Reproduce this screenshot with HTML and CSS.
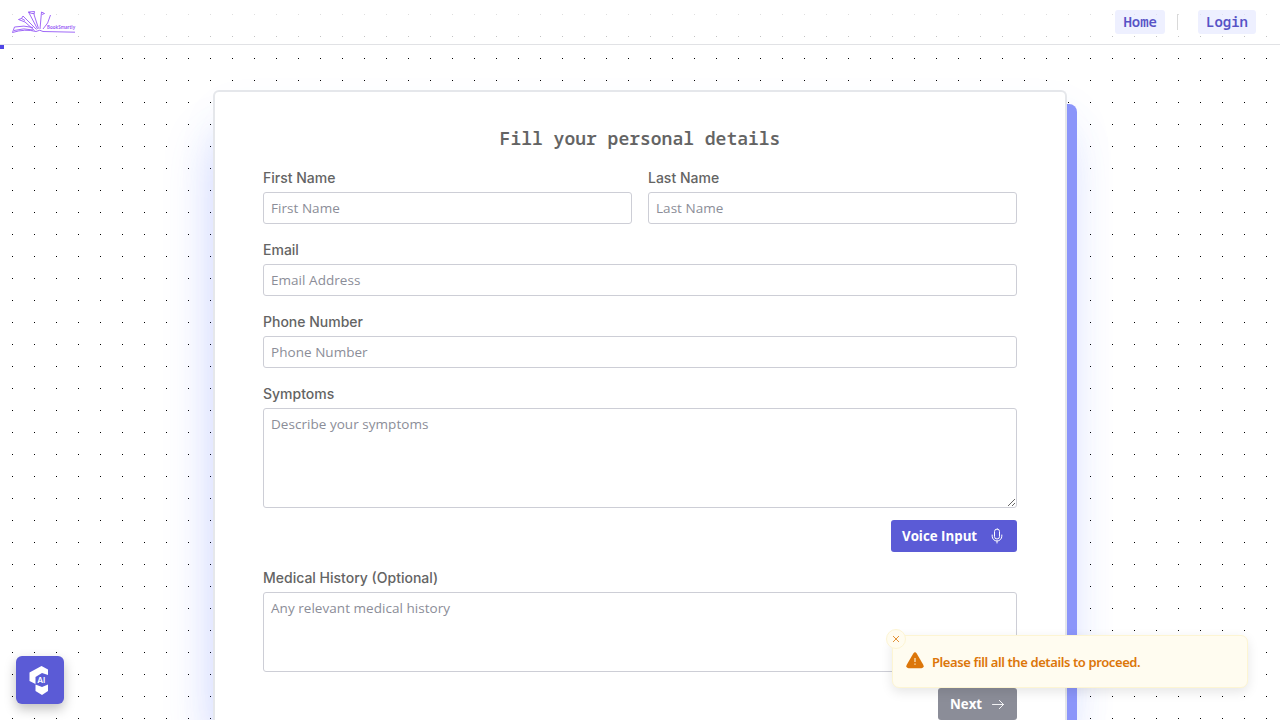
FILE: index.html
```html
<!DOCTYPE html>
<html lang="en">
<head>
<meta charset="utf-8">
<title>BookSmartly</title>
<link rel="stylesheet" href="styles.css">
</head>
<body>
<header class="navbar">
  <svg class="logo" width="66" height="26" viewBox="0 0 66 26" fill="none" stroke="#8f4ff6" stroke-width=".85">
    <path d="M1.5 23.5 3.5 18Q13 16 22 18.5M1.5 23.5Q14 19.5 25 22.5Q29 20 32 22.5L64 23.2M3 21.5Q13 18.5 22 21M23.5 21.5 14 13 7.5 10.5 10.5 9.5 12 7 25.5 20.5M10.5 9.5 14 11.5M26.5 20 17.5 3 23.5 2.5 23 5.5 27.5 19.5M17.5 3 20.5 4.5 23 4.5M29 20 30.5 3 33.5 4.5 31 5.5M32 20Q37.5 15 39.5 6"/>
    <text x="36" y="20" class="logo-text">BookSmartly</text>
  </svg>
  <nav class="links">
    <a class="link">Home</a>
    <span class="divider"></span>
    <a class="link">Login</a>
  </nav>
</header>
<div class="progress"></div>
<main class="page">
  <div class="card-wrap">
    <form class="card">
      <h1 class="title">Fill your personal details</h1>
      <div class="row">
        <label class="field"><span class="label">First Name</span><input class="input" placeholder="First Name"></label>
        <label class="field"><span class="label">Last Name</span><input class="input" placeholder="Last Name"></label>
      </div>
      <label class="field"><span class="label">Email</span><input class="input" placeholder="Email Address"></label>
      <label class="field"><span class="label">Phone Number</span><input class="input" placeholder="Phone Number"></label>
      <label class="field symptoms"><span class="label">Symptoms</span><textarea class="input area" placeholder="Describe your symptoms"></textarea></label>
      <button type="button" class="button voice">Voice Input
        <svg width="16" height="16" viewBox="0 0 16 16" fill="none" stroke="currentColor" stroke-linecap="round"><rect x="5.5" y="1" width="5" height="10" rx="2.5"/><path d="M3.2 7v1.2a4.8 4.8 0 0 0 9.6 0V7M8 13v2"/></svg>
      </button>
      <label class="field history"><span class="label">Medical History (Optional)</span><textarea class="input area short" placeholder="Any relevant medical history"></textarea></label>
      <button type="button" class="button next">Next
        <svg width="14" height="14" viewBox="0 0 14 14" fill="none" stroke="currentColor" stroke-width=".9" stroke-linecap="round" stroke-linejoin="round"><path d="M1.5 7.5h11M8.3 3.3l4.2 4.2-4.2 4.2"/></svg>
      </button>
    </form>
  </div>
</main>
<div class="assistant">
  <svg width="48" height="48" viewBox="0 0 48 48"><path fill="#fff" d="M25.5 10 32 13.5V19L26 17l-6.5 4v7L13.5 25v-8.5ZM19.5 28.5 26 31l6-2.5V35l-6 4-6.5-4Z"/><text class="ai" x="21.3" y="27">AI</text></svg>
</div>
<div class="toast">
  <span class="close"><svg width="8" height="8" viewBox="0 0 8 8" stroke="#dc7609" stroke-width=".8"><path d="m1 1 6 6M7 1 1 7"/></svg></span>
  <svg width="18" height="17" viewBox="0 0 18 17"><path fill="#dc7609" d="M7.3 1.4Q9-.9 10.7 1.4L17.4 13Q18.4 16 15.5 16.2H2.5Q-.4 16 .6 13Z"/><path d="M9 6v4M9 11.5v1.3" stroke="#fbe6c0" stroke-width="1.3"/></svg>
  <span class="message">Please fill all the details to proceed.</span>
</div>
</body>
</html>
```
FILE: styles.css
```css
* { box-sizing: border-box; }
body {
  margin: 0;
  height: 720px;
  overflow: hidden;
  font-family: "Open Sans", "Noto Sans", sans-serif;
  background: conic-gradient(from 90deg at 21px 21px, #000 25%, transparent 0) -9px -7px / 22px 22px #fff;
}
.navbar {
  position: relative;
  z-index: 2;
  display: flex;
  align-items: center;
  justify-content: space-between;
  height: 45px;
  padding: 0 24px 0 11px;
  background: linear-gradient(rgba(255, 255, 255, .95), rgba(255, 255, 255, .72));
  border-bottom: 1px solid #e1e2e5;
}
.logo-text { font: 600 4.5px "Noto Sans", sans-serif; fill: #9454f5; stroke: none; }
.links { display: flex; align-items: center; }
.link {
  height: 24px;
  padding: 0 8px;
  border-radius: 3px;
  background: rgba(224, 228, 255, .55);
  color: #5753c6;
  font: 600 14px/24px "Noto Sans Mono", "DejaVu Sans Mono", monospace;
}
.divider { width: 1px; height: 16px; margin: 0 20px 0 12px; background: #d9d9d9; }
.progress { width: 4px; height: 4px; background: #4f46e5; }
.page { display: flex; justify-content: center; height: 671px; padding-top: 41px; overflow: hidden; }
.card-wrap {
  position: relative;
  width: 854px;
  height: 630px;
}
.card-wrap::before {
  content: "";
  position: absolute;
  inset: 14px -10px 0 10px;
  border-radius: 8px 8px 0 0;
  background: #8b95fa;
  box-shadow: -12px 34px 50px -4px rgba(90, 110, 255, .28), -4px 10px 45px rgba(80, 130, 255, .08);
}
.card {
  position: relative;
  display: flex;
  flex-direction: column;
  height: 100%;
  padding: 32px 48px 0;
  border: 2px solid #e5e7eb;
  border-bottom: 0;
  border-radius: 6px 6px 0 0;
  background: #fff;
}
.title {
  margin: 0 0 16px;
  text-align: center;
  color: #646464;
  font: 600 18px/28px "Noto Sans Mono", "DejaVu Sans Mono", monospace;
}
.row { display: grid; grid-template-columns: 1fr 1fr; gap: 16px; }
.field { display: flex; flex-direction: column; margin-bottom: 16px; }
.label { height: 24px; color: #646464; font: 500 14px/20px Inter, sans-serif; }
.input {
  display: block;
  width: 100%;
  height: 32px;
  padding: 0 7px 1px;
  border: 1px solid #cdced6;
  border-radius: 3px;
  outline: none;
  background: #fff;
  font: 400 13.5px/20px "Open Sans", "Noto Sans", sans-serif;
  letter-spacing: .04px;
}
.input::placeholder { color: #8b8d98; }
.area { height: 100px; padding: 5px 7px; resize: vertical; }
.short { height: 80px; }
.symptoms { margin-bottom: 12px; }
.button {
  display: flex;
  align-items: center;
  justify-content: space-between;
  align-self: flex-end;
  flex-shrink: 0;
  height: 32px;
  border: 0;
  border-radius: 3px;
  color: #fff;
  font: 700 13.3px "Open Sans", "Noto Sans", sans-serif;
}
.voice { width: 126px; padding: 0 12px 1px 11px; background: #5b5bd6; }
.history { margin-top: 16px; }
.next { width: 79px; padding: 0 12px 1px; background: #8b8d98; }
.assistant {
  position: absolute;
  left: 16px;
  top: 656px;
  width: 48px;
  height: 48px;
  border-radius: 6px;
  background: #5b5bd6;
  box-shadow: 0 5px 12px rgba(0, 0, 0, .25);
}
.ai { font: 600 8px Inter, sans-serif; fill: #fff; }
.toast {
  position: absolute;
  left: 892px;
  top: 635px;
  width: 356px;
  height: 53px;
  display: flex;
  align-items: center;
  gap: 8px;
  padding: 0 14px 2px 13px;
  border: 1px solid #fdf5d3;
  border-radius: 7px;
  background: #fffcf0;
  color: #dc7609;
  font: 600 13px "Noto Sans", sans-serif;
  box-shadow: 0 4px 12px rgba(0, 0, 0, .1);
}
.message { padding-top: 3px; white-space: nowrap; letter-spacing: -.4px; }
.close {
  position: absolute;
  left: -7px;
  top: -7px;
  width: 20px;
  height: 20px;
  display: flex;
  align-items: center;
  justify-content: center;
  border: 1px solid #fdf5d3;
  border-radius: 50%;
  background: #fffcf0;
}
```
